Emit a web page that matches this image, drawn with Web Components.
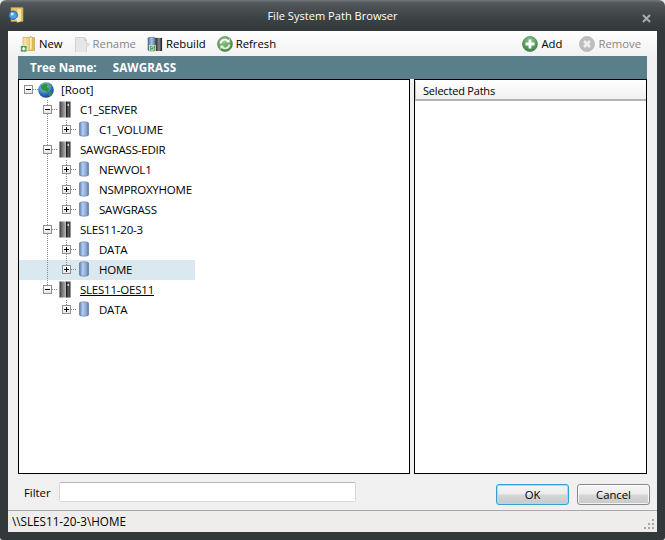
<!DOCTYPE html>
<html>
<head>
<meta charset="utf-8">
<title>File System Path Browser</title>
<style>
  html, body { margin: 0; height: 100%; background: #e8e8e8; }
  body { font: 11.3px "Open Sans", "Noto Sans", sans-serif; color: #000; }
</style>
</head>
<body>

<path-browser>
  <tool-bar slot="toolbar">
    <tool-button icon="new">New</tool-button>
    <tool-button icon="rename" disabled>Rename</tool-button>
    <tool-button icon="rebuild">Rebuild</tool-button>
    <tool-button icon="refresh">Refresh</tool-button>
    <tool-button icon="add" slot="end">Add</tool-button>
    <tool-button icon="remove" slot="end" disabled>Remove</tool-button>
  </tool-bar>
  <tree-view slot="tree">
    <tree-row level="0" icon="globe" guides="" open>[Root]</tree-row>
    <tree-row level="1" icon="server" guides="" open>C1_SERVER</tree-row>
    <tree-row level="2" icon="volume" guides="1 2e">C1_VOLUME</tree-row>
    <tree-row level="1" icon="server" guides="" open>SAWGRASS-EDIR</tree-row>
    <tree-row level="2" icon="volume" guides="1 2">NEWVOL1</tree-row>
    <tree-row level="2" icon="volume" guides="1 2">NSMPROXYHOME</tree-row>
    <tree-row level="2" icon="volume" guides="1 2e">SAWGRASS</tree-row>
    <tree-row level="1" icon="server" guides="" open>SLES11-20-3</tree-row>
    <tree-row level="2" icon="volume" guides="1 2">DATA</tree-row>
    <tree-row level="2" icon="volume" guides="1 2e" selected>HOME</tree-row>
    <tree-row level="1" icon="server" guides="" last open underline>SLES11-OES11</tree-row>
    <tree-row level="2" icon="volume" guides="2e">DATA</tree-row>
  </tree-view>
</path-browser>

<script>
const ICONS = {
  app: `<svg viewBox="0 0 16 16" width="16" height="16"><path d="M3 .5h12v14H3z" fill="#e6c765" stroke="#b3923f" stroke-width=".7"/><path d="M9 1l4.500 1v12l-4.500 1.500z" fill="#f6e7a6" stroke="#c9a645" stroke-width=".5"/><circle cx="5.200" cy="8.200" r="4.200" fill="#4f9fe6" stroke="#1f5fae" stroke-width="1"/><circle cx="4.200" cy="7" r="1.500" fill="#cfeafc"/><path d="M8.200 11.200 11.500 14.500" stroke="#dfe8f2" stroke-width="2.200"/></svg>`,
  new: `<svg viewBox="0 0 16 16" width="16" height="16"><defs><linearGradient id="f" x1="0" x2="1"><stop offset="0" stop-color="#f7e7a8"/><stop offset="1" stop-color="#dcb94f"/></linearGradient></defs><path d="M3 1.500h6l2-1v1h3.500v13H3z" fill="url(#f)" stroke="#c9a645" stroke-width=".7"/><path d="M9.500 1.500 12 1v12l-2.500 1.500z" fill="#fbf1c4" stroke="#c9a645" stroke-width=".5"/><rect x=".5" y="9.500" width="6.500" height="6.500" fill="#4f9a55" stroke="#fff" stroke-width=".6"/><path d="M3.750 11v3.600M2 12.800h3.500" stroke="#fff" stroke-width="1.300"/></svg>`,
  rename: `<svg viewBox="0 0 16 16" width="16" height="16"><path d="M1.500 1.500h9l2 2v5l1.500-1.500 1.500 1-3 3.500v5h-11z" fill="#e6e6e6" stroke="#d2d2d2"/><path d="M10.500 1.500v3h2" fill="none" stroke="#cdcdcd"/></svg>`,
  rebuild: `<svg viewBox="0 0 17 17" width="16" height="16"><defs><linearGradient id="d" x1="0" x2="1"><stop offset="0" stop-color="#4d74aa"/><stop offset=".5" stop-color="#a9c2e2"/><stop offset="1" stop-color="#4d6e9e"/></linearGradient><linearGradient id="s" x1="0" x2="1"><stop offset="0" stop-color="#222"/><stop offset=".55" stop-color="#8a8a8a"/><stop offset="1" stop-color="#111"/></linearGradient></defs><path d="M1 2.500C1 1 9 1 9 2.500V15c0 1.500-8 1.500-8 0z" fill="url(#d)" stroke="#41608c" stroke-width=".5"/><rect x="9" y="2" width="7" height="14" fill="url(#s)"/><rect x="2.500" y="10" width="6.500" height="6" fill="#4a9a4f" stroke="#e6f3e6" stroke-width=".7"/><path d="M4 13a2 2 0 0 1 3.400-1M7.500 13a2 2 0 0 1-3.400 1.300" stroke="#fff" fill="none" stroke-width=".9"/></svg>`,
  refresh: `<svg viewBox="0 0 16 16" width="16" height="16"><defs><radialGradient id="r" cx=".4" cy=".3" r=".8"><stop offset="0" stop-color="#9cc98f"/><stop offset="1" stop-color="#38843e"/></radialGradient></defs><circle cx="8" cy="8" r="7.500" fill="url(#r)" stroke="#4b7d4d" stroke-width=".6"/><path d="M3.500 7.500A4.600 4.600 0 0 1 11.300 5" fill="none" stroke="#fff" stroke-width="1.700"/><path d="M12.700 2.800 12.500 6.800 8.800 6z" fill="#fff"/><path d="M12.500 8.500A4.600 4.600 0 0 1 4.700 11" fill="none" stroke="#e9f2e0" stroke-width="1.700"/><path d="M3.300 13.200 3.500 9.200 7.200 10z" fill="#e9f2e0"/></svg>`,
  add: `<svg viewBox="0 0 16 16" width="16" height="16"><defs><radialGradient id="a" cx=".5" cy=".25" r=".85"><stop offset="0" stop-color="#8fc48e"/><stop offset="1" stop-color="#2c7c35"/></radialGradient></defs><circle cx="8" cy="8" r="7.500" fill="url(#a)" stroke="#3d7a42" stroke-width=".6"/><path d="M8 3.500v9M3.500 8h9" stroke="#fff" stroke-width="2.800"/></svg>`,
  remove: `<svg viewBox="0 0 16 16" width="16" height="16"><circle cx="8" cy="8" r="7.500" fill="#bdbdbd" stroke="#aaa" stroke-width=".6"/><path d="M5 5l6 6M11 5l-6 6" stroke="#f1f1f1" stroke-width="2.500"/></svg>`,
  globe: `<svg viewBox="0 0 16 16" width="16" height="16"><defs><radialGradient id="g" cx=".4" cy=".3" r=".8"><stop offset="0" stop-color="#a8d8f5"/><stop offset=".6" stop-color="#2b6fb8"/><stop offset="1" stop-color="#10306f"/></radialGradient></defs><circle cx="8" cy="8" r="7.800" fill="url(#g)"/><path d="M3 3.500 7 1.500l3 1-1 2.500 2 1.500-1.500 4L7.500 9 4.500 8 3 6zM11 11.500l2.500-1.500 1 1-2.500 3.500-1.500-.5z" fill="#2f9638"/><path d="M10.500 2l3 2-.5 2-2.500-1.500z" fill="#4bb04a"/></svg>`,
  server: `<svg viewBox="0 0 12 17" width="12" height="17"><defs><linearGradient id="v" x1="0" x2="1"><stop offset="0" stop-color="#2e2e2e"/><stop offset=".18" stop-color="#6a6a6a"/><stop offset=".55" stop-color="#b0b0b0"/><stop offset=".62" stop-color="#1c1c1c"/><stop offset=".82" stop-color="#5e5e5e"/><stop offset="1" stop-color="#262626"/></linearGradient></defs><rect x=".5" y=".5" width="11" height="16" fill="url(#v)"/><rect x="8.500" y="3" width="1.500" height="2" fill="#d5d5d5"/></svg>`,
  volume: `<svg viewBox="0 0 10 16" width="10" height="16"><defs><linearGradient id="b" x1="0" x2="1"><stop offset="0" stop-color="#5a7fb6"/><stop offset=".35" stop-color="#b7cdec"/><stop offset=".75" stop-color="#8ba9d6"/><stop offset="1" stop-color="#54739f"/></linearGradient></defs><path d="M.5 2C.5.500 9.500.500 9.500 2v12c0 1.500-9 1.500-9 0z" fill="url(#b)" stroke="#5c7aa8" stroke-width=".7"/></svg>`
};

class UiIcon extends HTMLElement {
  connectedCallback() {
    if (this.shadowRoot) return;
    this.attachShadow({ mode: "open" });
    this.shadowRoot.innerHTML = `
      <style>
        :host { display: inline-flex; align-items: center; justify-content: center; flex: none; }
        svg { display: block; }
      </style>
      ${ICONS[this.getAttribute("name")] || ""}`;
  }
}

class ToolButton extends HTMLElement {
  connectedCallback() {
    if (this.shadowRoot) return;
    this.attachShadow({ mode: "open" });
    this.shadowRoot.innerHTML = `
      <style>
        :host { display: inline-flex; align-items: center; gap: 3px; height: 24px; white-space: nowrap; }
        :host([disabled]) { color: #868686; }
      </style>
      <ui-icon name="${this.getAttribute("icon")}"></ui-icon><slot></slot>`;
  }
}

class ToolBar extends HTMLElement {
  constructor() {
    super();
    this.attachShadow({ mode: "open" });
    this.shadowRoot.innerHTML = `
      <style>
        :host {
          display: flex; align-items: center; height: 25px; padding: 0 16px 0 12px;
          background: linear-gradient(#ffffff, #f1f1f1);
        }
        .group { display: flex; align-items: center; gap: 11px; }
        .end { margin-left: auto; gap: 17px; }
      </style>
      <div class="group"><slot></slot></div>
      <div class="group end"><slot name="end"></slot></div>`;
  }
}

class TreeView extends HTMLElement {
  constructor() {
    super();
    this.attachShadow({ mode: "open" });
    this.shadowRoot.innerHTML = `
      <style>
        :host { display: block; height: 100%; background: #fff; overflow: hidden; }
      </style>
      <slot></slot>`;
  }
}

class TreeRow extends HTMLElement {
  connectedCallback() {
    if (this.shadowRoot) return;
    const level = +this.getAttribute("level");
    const guides = (this.getAttribute("guides") || "").split(" ");
    const isLast = this.hasAttribute("last");
    const cells = [];
    for (let i = 0; i <= level; i++) {
      let cls = "cell";
      if (guides.includes(String(i))) cls += " line";
      if (guides.includes(i + "e")) cls += " half";
      if (i === level) {
        if (i === 1) cls += isLast ? " half" : " line";
        cells.push(`<div class="${cls} hook"><div class="box">${this.hasAttribute("open") ? "" : '<i class="v"></i>'}<i class="h"></i></div></div>`);
      } else {
        cells.push(`<div class="${cls}"></div>`);
      }
    }
    this.attachShadow({ mode: "open" });
    this.shadowRoot.innerHTML = `
      <style>
        :host { display: flex; height: 20px; width: 176px; align-items: center; white-space: nowrap; color: #000; font-size: 11.5px; letter-spacing: -.22px; }
        :host([selected]) { background: #d9e9ef; }
        :host([level="0"]) { width: auto; letter-spacing: 0; }
        .cell { position: relative; width: 19px; height: 20px; flex: none; display: flex; align-items: flex-start; background-repeat: no-repeat; }
        .line { background-image: repeating-linear-gradient(#8a8a8a 0 1px, transparent 1px 2px); background-size: 1px 100%; background-position: 9px 0; }
        .half { background-image: repeating-linear-gradient(#8a8a8a 0 1px, transparent 1px 2px); background-size: 1px 9px; background-position: 9px 0; }
        .hook::after { content: ""; width: 5px; height: 1px; margin-top: 9px; background: repeating-linear-gradient(90deg, #8a8a8a 0 1px, transparent 1px 2px); }
        .box {
          position: relative; box-sizing: border-box; width: 9px; height: 9px; margin: 5px 0 0 5px;
          border: 1px solid #8e8e8e; background: linear-gradient(#fff, #e8e8e8); flex: none;
        }
        .h, .v { position: absolute; background: #000; }
        .h { left: 1px; top: 3px; width: 5px; height: 1px; }
        .v { left: 3px; top: 1px; width: 1px; height: 5px; }
        .icon { width: 23px; flex: none; display: flex; align-self: flex-start; margin-top: 1px; }
        :host([level="0"]) .icon { margin-top: 2px; }
        :host([level="1"]) .icon { padding-left: 2px; width: 21px; }
        :host([level="2"]) .icon { padding-left: 3px; width: 20px; }
        .label { padding-bottom: 1px; }
        :host([underline]) .label { text-decoration: underline; }
      </style>
      ${cells.join("")}
      <div class="icon"><ui-icon name="${this.getAttribute("icon")}"></ui-icon></div>
      <span class="label"><slot></slot></span>`;
  }
}

class PathBrowser extends HTMLElement {
  constructor() {
    super();
    this.attachShadow({ mode: "open" });
    this.shadowRoot.innerHTML = `
      <style>
        :host {
          display: flex; flex-direction: column; box-sizing: border-box; width: 665px; height: 540px;
          padding: 0 8px 8px; border-radius: 6px 6px 3px 3px;
          background: linear-gradient(#74787a 0, #50565a 3px, #3d4344 18px, #33393a 31px);
        }
        .title {
          height: 31px; flex: none; display: flex; align-items: center; justify-content: center;
          color: #fff; position: relative; font-size: 11.1px;
        }
        .title ui-icon { position: absolute; left: 0; top: 7px; }
        .close { position: absolute; right: 6px; top: 14px; display: block; }
        .client { flex: 1; display: flex; flex-direction: column; background: #f0f0f0; min-height: 0; }
        .content { flex: none; padding: 0 10px; height: 418px; display: flex; flex-direction: column; box-sizing: border-box; }
        .namebar {
          height: 23px; flex: none; display: flex; align-items: center; gap: 16px;
          padding-left: 12px; background: #5a7f8b; color: #fff; font-weight: 700; font-size: 11.6px;
        }
        .namebar span + span { letter-spacing: .15px; }
        .panes { display: flex; gap: 4px; height: 395px; flex: none; }
        .pane { box-sizing: border-box; height: 395px; border: 1px solid #000; background: #fff; flex: none; }
        .left { width: 392px; }
        .right { width: 233px; }
        .header {
          height: 20px; margin-top: 1px; box-sizing: border-box; padding: 0 0 0 7px; display: flex; align-items: center;
          background: linear-gradient(#fff, #f0f0f0); border-bottom: 2px solid #b4b4b4; border-left: 1px solid #c8c8c8;
          font-size: 11px; letter-spacing: -.2px;
        }
        .filter { flex: none; height: 36px; display: flex; align-items: center; padding: 0 7px 0 16px; }
        .filter label { width: 35px; flex: none; }
        .input {
          box-sizing: border-box; width: 297px; height: 20px; background: #fff; border: 1px solid #d7d9db;
          border-top-color: #b5b5b5; border-radius: 2px;
        }
        .btn {
          box-sizing: border-box; width: 73px; height: 21px; margin-top: 4px; display: flex; align-items: center; justify-content: center;
          border: 1px solid #8a8a8a; border-radius: 3px; background: linear-gradient(#f6f6f6 0, #ececec 48%, #d6d6d6 52%, #c9c9c9 100%);
          box-shadow: inset 0 0 0 1px rgba(255,255,255,.75);
        }
        .ok { margin-left: auto; margin-right: 8px; border-color: #3a9fd0; box-shadow: inset 0 0 0 1px #a5dcf4; }
        .status {
          flex: 1; display: flex; align-items: center; padding: 0 0 2px 4px; background: #efecec;
          border-top: 1px solid #a9a9a9; position: relative; font-size: 11.7px;
        }
        .grip { position: absolute; right: 2px; bottom: 2px; }
      </style>
      <div class="title">
        <ui-icon name="app"></ui-icon>
        <span>File System Path Browser</span>
        <svg class="close" width="9" height="9" viewBox="0 0 9 9"><path d="M1 1l7 7M8 1L1 8" stroke="#a9acad" stroke-width="2"/></svg>
      </div>
      <div class="client">
        <slot name="toolbar"></slot>
        <div class="content">
          <div class="namebar"><span>Tree Name:</span><span>SAWGRASS</span></div>
          <div class="panes">
            <div class="pane left"><slot name="tree"></slot></div>
            <div class="pane right"><div class="header">Selected Paths</div></div>
          </div>
        </div>
        <div class="filter">
          <label>Filter</label>
          <div class="input"></div>
          <div class="btn ok">OK</div>
          <div class="btn">Cancel</div>
        </div>
        <div class="status">\\\\SLES11-20-3\\HOME
          <svg class="grip" width="11" height="11" viewBox="0 0 11 11"><path d="M8 0h2v2H8zM4 4h2v2H4zM8 4h2v2H8zM0 8h2v2H0zM4 8h2v2H4zM8 8h2v2H8z" fill="#a8a8a8"/></svg>
        </div>
      </div>`;
  }
}

customElements.define("ui-icon", UiIcon);
customElements.define("tool-button", ToolButton);
customElements.define("tool-bar", ToolBar);
customElements.define("tree-view", TreeView);
customElements.define("tree-row", TreeRow);
customElements.define("path-browser", PathBrowser);
</script>
</body>
</html>
